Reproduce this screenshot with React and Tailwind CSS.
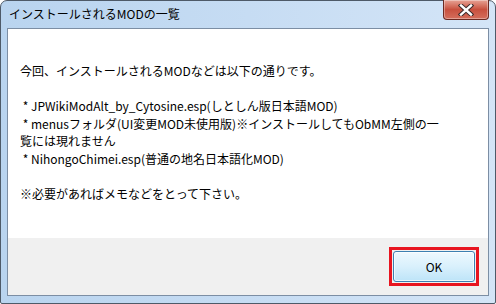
export default function App() {
  const lines = [
    "今回、インストールされるMODなどは以下の通りです。",
    "",
    " * JPWikiModAlt_by_Cytosine.esp(しとしん版日本語MOD)",
    " * menusフォルダ(UI変更MOD未使用版)※インストールしてもObMM左側の一",
    "覧には現れません",
    " * NihongoChimei.esp(普通の地名日本語化MOD)",
    "",
    "※必要があればメモなどをとって下さい。",
  ];

  return (
    <div className="w-[496px] h-[304px] bg-white">
      <div
        className="w-[496px] h-[304px] flex flex-col px-[6px] pb-[7px] rounded-t-[7px] rounded-b-[2px] border border-[#4e5a68] bg-gradient-to-r from-[#b9d4ef] via-[#c6dcf3] to-[#d4e5f7]"
        style={{ fontFamily: '"Noto Sans CJK JP", "Liberation Sans", sans-serif' }}
      >
        {/* title bar */}
        <div className="h-[28px] -mt-px flex items-start justify-between">
          <div className="pl-[2px] pt-[5px] text-[12px] leading-[18px] text-black">
            インストールされるMODの一覧
          </div>
          <div className="mt-0 w-[46px] h-[20px] rounded-b-[4px] border border-t-0 border-[#6b2a22] bg-gradient-to-b from-[#e6a295] via-[#c8503e] to-[#d46e5c] flex items-center justify-center shadow-[inset_0_0_0_1px_rgba(255,255,255,0.35)]">
            <svg width="16" height="12" viewBox="0 0 16 12">
              <path
                d="M3 1.5 L13 10.5 M13 1.5 L3 10.5"
                stroke="#3a2a2a"
                strokeWidth="4.4"
                strokeLinecap="square"
                fill="none"
              />
              <path
                d="M3 1.5 L13 10.5 M13 1.5 L3 10.5"
                stroke="#ffffff"
                strokeWidth="2.4"
                strokeLinecap="square"
                fill="none"
              />
            </svg>
          </div>
        </div>

        {/* client area */}
        <div className="flex-1 flex flex-col border border-[#7c8ea4] bg-white">
          <div className="flex-1 pl-[12px] pt-[33px] text-[12px] leading-[17.5px] text-black">
            {lines.map((l, i) => (
              <div key={i} className="whitespace-pre h-[17.5px]">
                {l}
              </div>
            ))}
          </div>
          <div className="h-[57px] bg-[#f0f0f0] flex items-start justify-end pr-[9px] pt-[9px]">
            <div className="border-[3px] border-[#e8141f] p-[1px]">
              <button className="w-[82px] h-[31px] rounded-[3px] border border-[#3c7fb1] bg-gradient-to-b from-[#eef8fe] via-[#d9f0fc] to-[#bde4f8] shadow-[inset_0_0_0_1px_rgba(255,255,255,0.7)] text-[12px] text-black flex items-center justify-center">
                OK
              </button>
            </div>
          </div>
        </div>
      </div>
    </div>
  );
}
